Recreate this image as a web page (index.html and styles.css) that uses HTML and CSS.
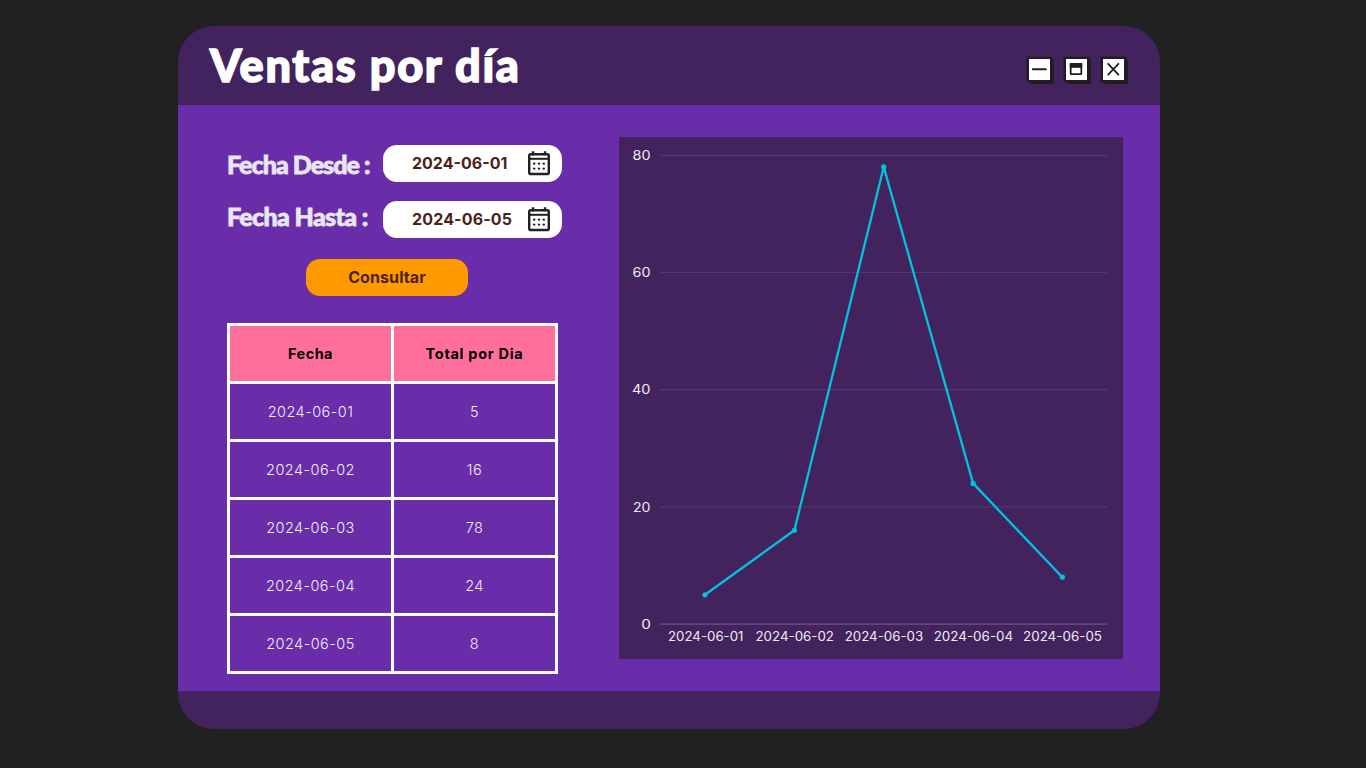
FILE: index.html
```html
<!DOCTYPE html>
<html lang="es">
<head>
<meta charset="utf-8">
<title>Ventas por día</title>
<link rel="stylesheet" href="styles.css">
</head>
<body>
<svg class="defs" width="0" height="0">
  <symbol id="calendar" viewBox="0 0 24 26">
    <path d="M6 1.2v4M18 1.2v4" stroke="#212121" stroke-width="2.4"/>
    <rect x="2.2" y="4.2" width="19.6" height="19.8" rx="1.6" fill="none" stroke="#212121" stroke-width="2.4"/>
    <path d="M2 8.8h20" stroke="#212121" stroke-width="2"/>
    <g fill="#212121"><circle cx="7.2" cy="13.6" r="1.2"/><circle cx="12" cy="13.6" r="1.2"/><circle cx="16.8" cy="13.6" r="1.2"/><circle cx="7.2" cy="18.6" r="1.2"/><circle cx="12" cy="18.6" r="1.2"/><circle cx="16.8" cy="18.6" r="1.2"/></g>
  </symbol>
  <symbol id="frame" viewBox="0 0 28 28">
    <rect x="4.5" y="3.2" width="23.3" height="24.8" rx="0.8" fill="#211d20"/>
    <rect x="0.5" y="0.7" width="25.7" height="25.6" rx="0.8" fill="#211d20"/>
    <rect x="3" y="3" width="21" height="21" fill="#fff"/>
  </symbol>
</svg>
<main class="window">
  <header class="bar">
    <h1 class="title">Ventas por día</h1>
    <div class="controls">
      <svg class="control" viewBox="0 0 28 28"><use href="#frame"/><path d="M6.8 13.2h13" stroke="#211d20" stroke-width="1.9" stroke-linecap="round"/></svg>
      <svg class="control" viewBox="0 0 28 28"><use href="#frame"/><rect x="7.7" y="7.8" width="10.6" height="10.4" rx=".4" fill="#fff" stroke="#211d20" stroke-width="1.8"/><path d="M6.8 9.4h12.4" stroke="#211d20" stroke-width="4.8"/></svg>
      <svg class="control" viewBox="0 0 28 28"><use href="#frame"/><path d="M8.2 7.8l10.2 10.8M18.4 7.8l-10.2 10.8" stroke="#211d20" stroke-width="1.8" stroke-linecap="round"/></svg>
    </div>
  </header>
  <section class="body">
    <div class="left">
      <form class="filters">
        <div class="field">
          <span class="label from">Fecha Desde :</span>
          <div class="input"><span class="date">2024-06-01</span><svg class="cal"><use href="#calendar"/></svg></div>
        </div>
        <div class="field">
          <span class="label to">Fecha Hasta :</span>
          <div class="input"><span class="date wide">2024-06-05</span><svg class="cal"><use href="#calendar"/></svg></div>
        </div>
        <button class="submit" type="button">Consultar</button>
      </form>
      <div class="table">
        <div class="cell head">Fecha</div><div class="cell head total">Total por Dia</div>
        <div class="cell">2024-06-01</div><div class="cell">5</div>
        <div class="cell">2024-06-02</div><div class="cell">16</div>
        <div class="cell">2024-06-03</div><div class="cell">78</div>
        <div class="cell">2024-06-04</div><div class="cell">24</div>
        <div class="cell">2024-06-05</div><div class="cell">8</div>
      </div>
    </div>
    <svg class="chart" viewBox="619 137 504 522">
      <g class="grid"><path d="M660 155.3h447M660 272.4h447M660 389.6h447M660 506.8h447"/><path class="axis" d="M660 624.1h447"/></g>
      <g class="tick y">
        <text x="632.5" y="160" textLength="18" lengthAdjust="spacingAndGlyphs">80</text>
        <text x="632.5" y="277.1" textLength="18" lengthAdjust="spacingAndGlyphs">60</text>
        <text x="632" y="394.3" textLength="18.5" lengthAdjust="spacingAndGlyphs">40</text>
        <text x="633" y="511.8" textLength="17.5" lengthAdjust="spacingAndGlyphs">20</text>
        <text x="641.2" y="629" textLength="9.6" lengthAdjust="spacingAndGlyphs">0</text>
      </g>
      <g class="tick">
        <text x="668" y="641" textLength="75.5" lengthAdjust="spacingAndGlyphs">2024-06-01</text>
        <text x="755.5" y="641" textLength="78.5" lengthAdjust="spacingAndGlyphs">2024-06-02</text>
        <text x="844.7" y="641" textLength="78.5" lengthAdjust="spacingAndGlyphs">2024-06-03</text>
        <text x="933.7" y="641" textLength="79.5" lengthAdjust="spacingAndGlyphs">2024-06-04</text>
        <text x="1023" y="641" textLength="79" lengthAdjust="spacingAndGlyphs">2024-06-05</text>
      </g>
      <path class="series" d="M705 594.8L794.4 530.3 883.7 166.9 973.1 483.4 1062.4 577.2"/>
      <g class="dots"><circle cx="705" cy="594.8" r="2.6"/><circle cx="794.4" cy="530.3" r="2.6"/><circle cx="883.7" cy="166.9" r="2.6"/><circle cx="973.1" cy="483.4" r="2.6"/><circle cx="1062.4" cy="577.2" r="2.6"/></g>
    </svg>
  </section>
  <footer class="foot"></footer>
</main>
</body>
</html>
```
FILE: styles.css
```css
* { box-sizing: border-box; }
body { margin: 0; height: 768px; overflow: hidden; background: #212121; padding: 26px 206px 39px 178px; font-family: Inter, "Liberation Sans", sans-serif; }
.defs { display: block; }
.window { display: grid; grid-template-rows: 79px 586px 38px; width: 982px; }
.bar { display: flex; justify-content: space-between; align-items: center; background: #42235e; border-radius: 36px 36px 0 0; padding: 0 32px 0 32px; }
.title { margin: 0; padding-bottom: 2px; font: 900 45px/60px Lato, sans-serif; color: #fff; white-space: nowrap; letter-spacing: 1.7px; -webkit-text-stroke: 1.5px #fff; }
.controls { display: flex; gap: 9px; padding-top: 9px; }
.control { width: 28px; height: 28px; display: block; }
.body { display: flex; justify-content: space-between; background: #6a2daa; padding: 32px 37px 32px 49px; }
.left { width: 334.5px; }
.filters { display: flex; flex-direction: column; gap: 19px; padding-top: 8px; }
.field { display: flex; justify-content: space-between; align-items: center; height: 37px; }
.label { font: 900 25px/30px Lato, sans-serif; color: #e8e6ee; white-space: nowrap; letter-spacing: -0.95px; -webkit-text-stroke: 0.8px #e8e6ee; }
.label.from { margin-top: 0; }
.label.to { margin-top: -8px; letter-spacing: -0.65px; }
.input { display: flex; align-items: center; justify-content: space-between; width: 178.5px; height: 37px; border-radius: 14px; background: #fff; padding: 0 10.5px 0 29px; flex: none; }
.date { font-size: 16px; font-weight: 700; color: #4a221c; white-space: nowrap; padding-bottom: 1px; }
.date.wide { letter-spacing: 0.15px; }
.cal { width: 24px; height: 26px; margin-bottom: 1px; }
.submit { width: 162px; height: 37px; margin: 2px 0 0 79px; padding: 0 0 2px; border: 0; border-radius: 14px; background: #ff9900; color: #4a221c; font: 700 16px Inter, sans-serif; letter-spacing: 0.1px; }
.table { display: grid; grid-template-columns: 161px 161px; grid-auto-rows: 55px; gap: 3px; padding: 3px; width: 331px; margin-top: 27px; background: #fff; }
.cell { display: flex; align-items: center; justify-content: center; background: #6a2daa; color: #f3eef8; font-size: 14.5px; font-weight: 350; letter-spacing: 0.45px; padding-bottom: 1px; }
.cell.head { background: #ff6f9c; color: #000; font-weight: 700; }
.cell.total { letter-spacing: 0.7px; }
.chart { width: 504px; height: 522px; background: #42235e; flex: none; }
.grid path { stroke: #54376e; stroke-width: 1.2; }
.grid .axis { stroke: #62467b; stroke-width: 1.8; }
.tick text { font: 12.8px Inter, sans-serif; fill: #efebf3; }
.series { fill: none; stroke: #00c4dc; stroke-width: 2.3; stroke-linejoin: round; }
.dots { fill: #00c4dc; }
.foot { background: #42235e; border-radius: 0 0 36px 36px; }
```
